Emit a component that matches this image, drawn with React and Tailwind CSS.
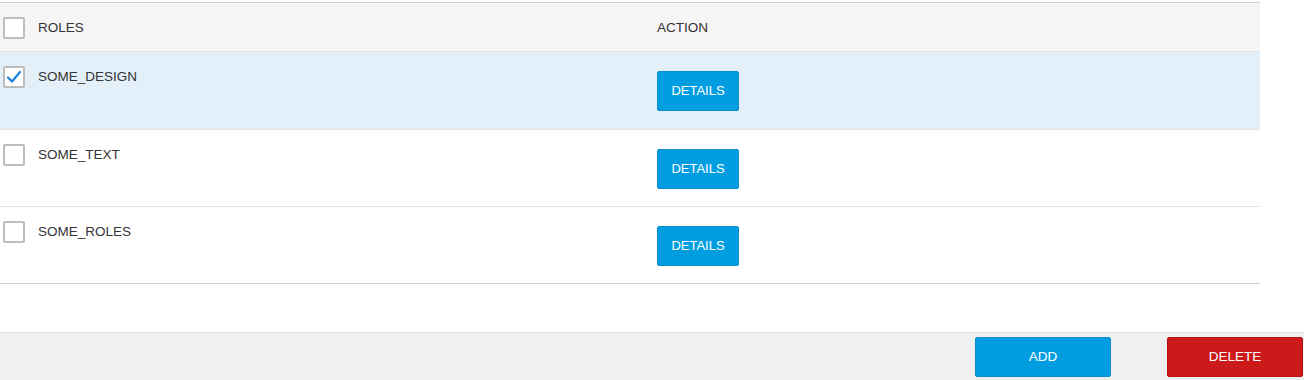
import React from "react";

function Box({ checked }) {
  return (
    <div className="w-[22px] h-[22px] border-2 border-[#bdbdbd] rounded-[2px] bg-white flex items-center justify-center">
      {checked && (
        <svg width="16" height="14" viewBox="0 0 16 14">
          <path d="M2 7.5 L6 11.5 L14 2" fill="none" stroke="#1a7fd6" strokeWidth="2.2" strokeLinecap="round" strokeLinejoin="round" />
        </svg>
      )}
    </div>
  );
}

const rows = [
  { name: "SOME_DESIGN", checked: true, h: "h-[78px]" },
  { name: "SOME_TEXT", checked: false, h: "h-[77px]" },
  { name: "SOME_ROLES", checked: false, h: "h-[77px]" },
];

export default function App() {
  return (
    <div className="w-[1304px] h-[380px] bg-white flex flex-col text-[#333]" style={{ fontFamily: '"Liberation Sans", Arial, sans-serif' }}>
      <div className="w-[1260px] mt-[2px] border-t border-[#cfcfcf]">
        <div className="h-[49px] bg-[#f5f5f5] flex items-center border-b border-[#e2e2e2] text-[13.5px]">
          <div className="w-[38px] pl-[3px] pt-[1px]">
            <Box />
          </div>
          <div className="w-[619px] pt-[2px]">ROLES</div>
          <div className="pt-[2px]">ACTION</div>
        </div>
        {rows.map((r, i) => (
          <div
            key={r.name}
            className={`${r.h} flex items-start border-b ${i === rows.length - 1 ? "border-[#d0d0d0]" : "border-[#e2e2e2]"} ${r.checked ? "bg-[#e3f0f9]" : "bg-white"}`}
          >
            <div className="w-[38px] pl-[3px] pt-[14px]">
              <Box checked={r.checked} />
            </div>
            <div className="w-[619px] pt-[17px] text-[13.5px] leading-[16px]">{r.name}</div>
            <div className="pt-[19px]">
              <button className="w-[82px] h-[40px] bg-[#009ee0] border border-[#0b8fcc] rounded-[2px] text-white text-[13px]">
                DETAILS
              </button>
            </div>
          </div>
        ))}
      </div>
      <div className="h-[48px]" />
      <div className="flex-1 border-t border-[#dcdcdc] bg-[#f0f0f0] flex items-start justify-end pt-[4px] pr-[1px] gap-[56px]">
        <button className="w-[136px] h-[40px] bg-[#009ee0] border border-[#0b8fcc] rounded-[2px] text-white text-[13.5px]">
          ADD
        </button>
        <button className="w-[136px] h-[40px] bg-[#cc1a1a] border border-[#b81515] rounded-[2px] text-white text-[13.5px]">
          DELETE
        </button>
      </div>
    </div>
  );
}
